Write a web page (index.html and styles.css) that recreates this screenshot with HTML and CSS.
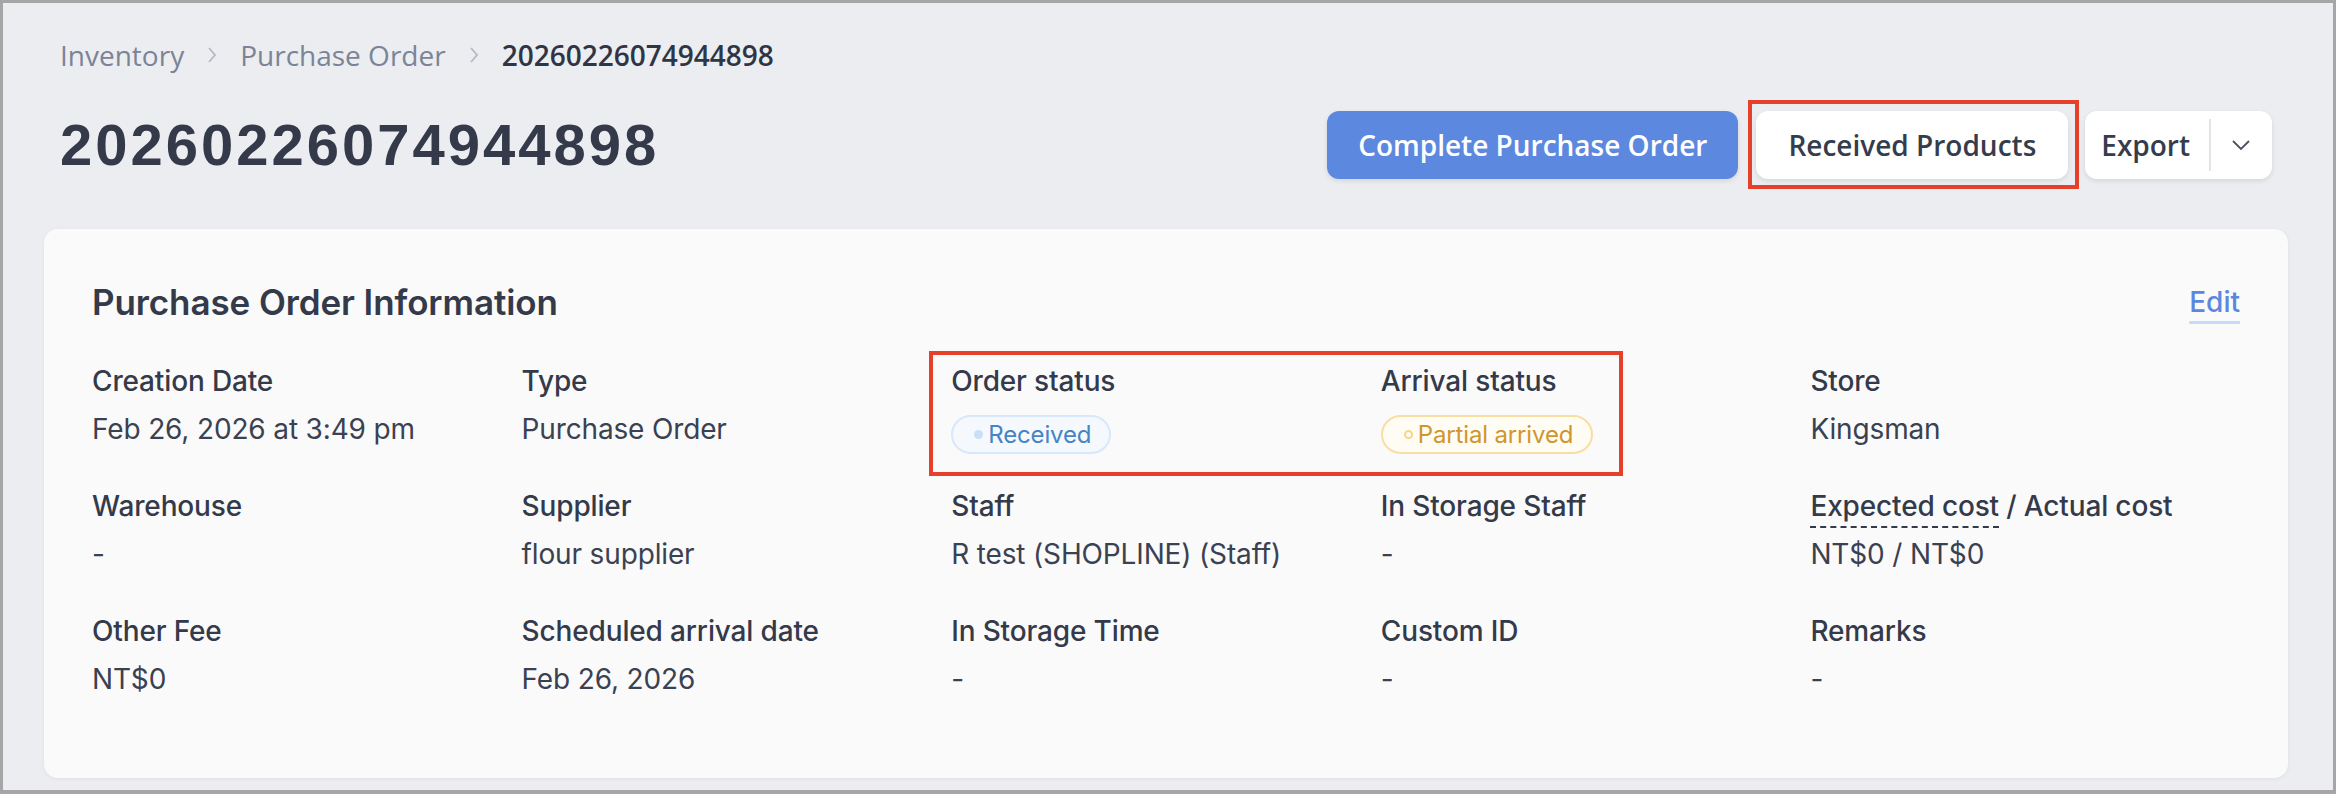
FILE: index.html
```html
<!DOCTYPE html>
<html lang="en">
<head>
    <meta charset="UTF-8">
    <meta name="viewport" content="width=device-width, initial-scale=1.0">
    <title>20260226074944898 - Purchase Order</title>
    <link rel="stylesheet" href="styles.css">
</head>
<body>
    <div class="page">
        <nav class="breadcrumb">
            <a href="#">Inventory</a>
            <svg class="crumb-sep" width="10" height="18" viewBox="0 0 10 18"><polyline points="2,2 8,9 2,16" fill="none" stroke="#b3b8c3" stroke-width="1.8"/></svg>
            <a href="#">Purchase Order</a>
            <svg class="crumb-sep" width="10" height="18" viewBox="0 0 10 18"><polyline points="2,2 8,9 2,16" fill="none" stroke="#b3b8c3" stroke-width="1.8"/></svg>
            <span class="current">20260226074944898</span>
        </nav>

        <div class="page-header">
            <h1>20260226074944898</h1>
            <div class="actions">
                <button class="btn btn-primary">Complete Purchase Order</button>
                <span class="highlight-wrap">
                    <button class="btn">Received Products</button>
                </span>
                <div class="btn-group">
                    <button class="btn-part">Export</button>
                    <span class="divider"></span>
                    <button class="btn-part caret">
                        <svg width="20" height="12" viewBox="0 0 20 12"><polyline points="2,2 10,10 18,2" fill="none" stroke="#4a5162" stroke-width="1.8"/></svg>
                    </button>
                </div>
            </div>
        </div>

        <section class="card">
            <div class="card-head">
                <h2>Purchase Order Information</h2>
                <a href="#" class="edit-link">Edit</a>
            </div>
            <div class="info-grid">
                <div class="field">
                    <div class="label">Creation Date</div>
                    <div class="value">Feb 26, 2026 at 3:49 pm</div>
                </div>
                <div class="field">
                    <div class="label">Type</div>
                    <div class="value">Purchase Order</div>
                </div>
                <div class="field status-field">
                    <div class="label">Order status</div>
                    <div class="value"><span class="badge badge-blue"><i class="dot"></i>Received</span></div>
                </div>
                <div class="field">
                    <div class="label">Arrival status</div>
                    <div class="value"><span class="badge badge-yellow"><i class="dot"></i>Partial arrived</span></div>
                </div>
                <div class="field">
                    <div class="label">Store</div>
                    <div class="value">Kingsman</div>
                </div>

                <div class="field">
                    <div class="label">Warehouse</div>
                    <div class="value">-</div>
                </div>
                <div class="field">
                    <div class="label">Supplier</div>
                    <div class="value">flour supplier</div>
                </div>
                <div class="field">
                    <div class="label">Staff</div>
                    <div class="value">R test (SHOPLINE) (Staff)</div>
                </div>
                <div class="field">
                    <div class="label">In Storage Staff</div>
                    <div class="value">-</div>
                </div>
                <div class="field">
                    <div class="label"><span class="hint">Expected cost</span> / Actual cost</div>
                    <div class="value">NT$0 / NT$0</div>
                </div>

                <div class="field">
                    <div class="label">Other Fee</div>
                    <div class="value">NT$0</div>
                </div>
                <div class="field">
                    <div class="label">Scheduled arrival date</div>
                    <div class="value">Feb 26, 2026</div>
                </div>
                <div class="field">
                    <div class="label">In Storage Time</div>
                    <div class="value">-</div>
                </div>
                <div class="field">
                    <div class="label">Custom ID</div>
                    <div class="value">-</div>
                </div>
                <div class="field">
                    <div class="label">Remarks</div>
                    <div class="value">-</div>
                </div>
            </div>
        </section>
    </div>
</body>
</html>
```

FILE: styles.css
```css
* {
    box-sizing: border-box;
}
body {
    margin: 0;
    height: 100vh;
    overflow: hidden;
    background: #ecedf0;
    border: 3px solid #a6a6a6;
    border-bottom-width: 4px;
    font-family: 'Inter', sans-serif;
    color: #353c4c;
}
.page {
    padding: 32px 45px 0 41px;
}

/* breadcrumb */
.breadcrumb {
    display: flex;
    align-items: center;
    padding: 0 16px;
    height: 40px;
    font-family: 'Open Sans', sans-serif;
    font-size: 28px;
}
.breadcrumb a {
    color: #7b8497;
    text-decoration: none;
}
.crumb-sep {
    margin: 0 23px;
}
.breadcrumb .current {
    color: #2f3545;
    font-weight: 600;
}

/* header */
.page-header {
    display: flex;
    justify-content: space-between;
    align-items: center;
    margin-top: 36px;
    padding: 0 16px;
    height: 68px;
}
h1 {
    margin: 0;
    font-family: 'Liberation Sans', sans-serif;
    font-size: 58px;
    line-height: 68px;
    font-weight: bold;
    letter-spacing: 3px;
    color: #343a4a;
}
.actions {
    display: flex;
    align-items: center;
    gap: 18px;
}
.btn {
    height: 68px;
    padding: 0 32px;
    border: none;
    border-radius: 12px;
    background: white;
    color: #353c4c;
    font-family: 'Open Sans', sans-serif;
    font-size: 28px;
    font-weight: 600;
    box-shadow: 0 2px 5px rgba(0, 0, 0, 0.1);
    cursor: pointer;
}
.btn-primary {
    background: #5c88df;
    color: white;
    padding: 0 31px;
}
.highlight-wrap {
    position: relative;
    display: flex;
}
.highlight-wrap::after {
    content: "";
    position: absolute;
    top: -11px;
    left: -8px;
    right: -11px;
    bottom: -10px;
    border: 4px solid #e5402a;
    pointer-events: none;
}
.btn-group {
    display: flex;
    align-items: center;
    height: 68px;
    margin-left: -1px;
    background: white;
    border-radius: 12px;
    box-shadow: 0 2px 5px rgba(0, 0, 0, 0.1);
}
.btn-part {
    height: 100%;
    padding: 0 19px 0 16px;
    border: none;
    background: none;
    color: #353c4c;
    font-family: 'Open Sans', sans-serif;
    font-size: 28px;
    font-weight: 600;
    cursor: pointer;
}
.btn-part.caret {
    display: flex;
    align-items: center;
    padding: 0 21px 0 20px;
}
.divider {
    width: 2px;
    height: 52px;
    background: #e1e4e9;
}

/* info card */
.card {
    margin-top: 50px;
    height: 549px;
    padding: 51px 48px 0;
    background: #fafafa;
    border-radius: 14px;
    box-shadow: 0 1px 4px rgba(0, 0, 0, 0.06);
}
.card-head {
    display: flex;
    justify-content: space-between;
    align-items: center;
    height: 44px;
}
h2 {
    margin: 0;
    font-size: 35px;
    line-height: 44px;
    font-weight: 600;
    letter-spacing: -0.1px;
    color: #343a4a;
}
.edit-link {
    color: #5b87de;
    font-size: 28px;
    font-weight: 500;
    text-decoration: underline;
    text-decoration-color: #c8daf6;
    text-decoration-thickness: 3px;
    text-underline-offset: 9px;
}
.info-grid {
    display: grid;
    grid-template-columns: repeat(5, 1fr);
    row-gap: 41px;
    margin-top: 39px;
    letter-spacing: -0.15px;
}
.field {
    display: flex;
    flex-direction: column;
    gap: 12px;
}
.label {
    font-size: 28px;
    line-height: 36px;
    font-weight: 500;
    color: #343a4a;
}
.value {
    height: 36px;
    font-size: 28px;
    line-height: 36px;
    color: #3a4151;
}
.hint {
    text-decoration: underline dashed #343a4a;
    text-decoration-thickness: 2px;
    text-underline-offset: 10px;
}

/* status badges */
.badge {
    display: inline-flex;
    align-items: center;
    gap: 5px;
    height: 39px;
    margin-top: 3px;
    padding: 0 18px 0 21px;
    border: 2px solid;
    border-radius: 20px;
    font-size: 24px;
}
.badge .dot {
    width: 9px;
    height: 9px;
    border-radius: 50%;
}
.badge-blue {
    color: #4684c4;
    background: #f5f9fe;
    border-color: #d7e8fa;
}
.badge-blue .dot {
    background: #c8e0f6;
}
.badge-yellow {
    color: #d0962c;
    background: #fffcf4;
    border-color: #f8dea2;
}
.badge-yellow .dot {
    border: 2px solid #f4d68c;
}
.status-field {
    position: relative;
}
.status-field::after {
    content: "";
    position: absolute;
    top: -12px;
    left: -22px;
    width: 686px;
    height: 117px;
    border: 4px solid #e5402a;
    pointer-events: none;
}
```
